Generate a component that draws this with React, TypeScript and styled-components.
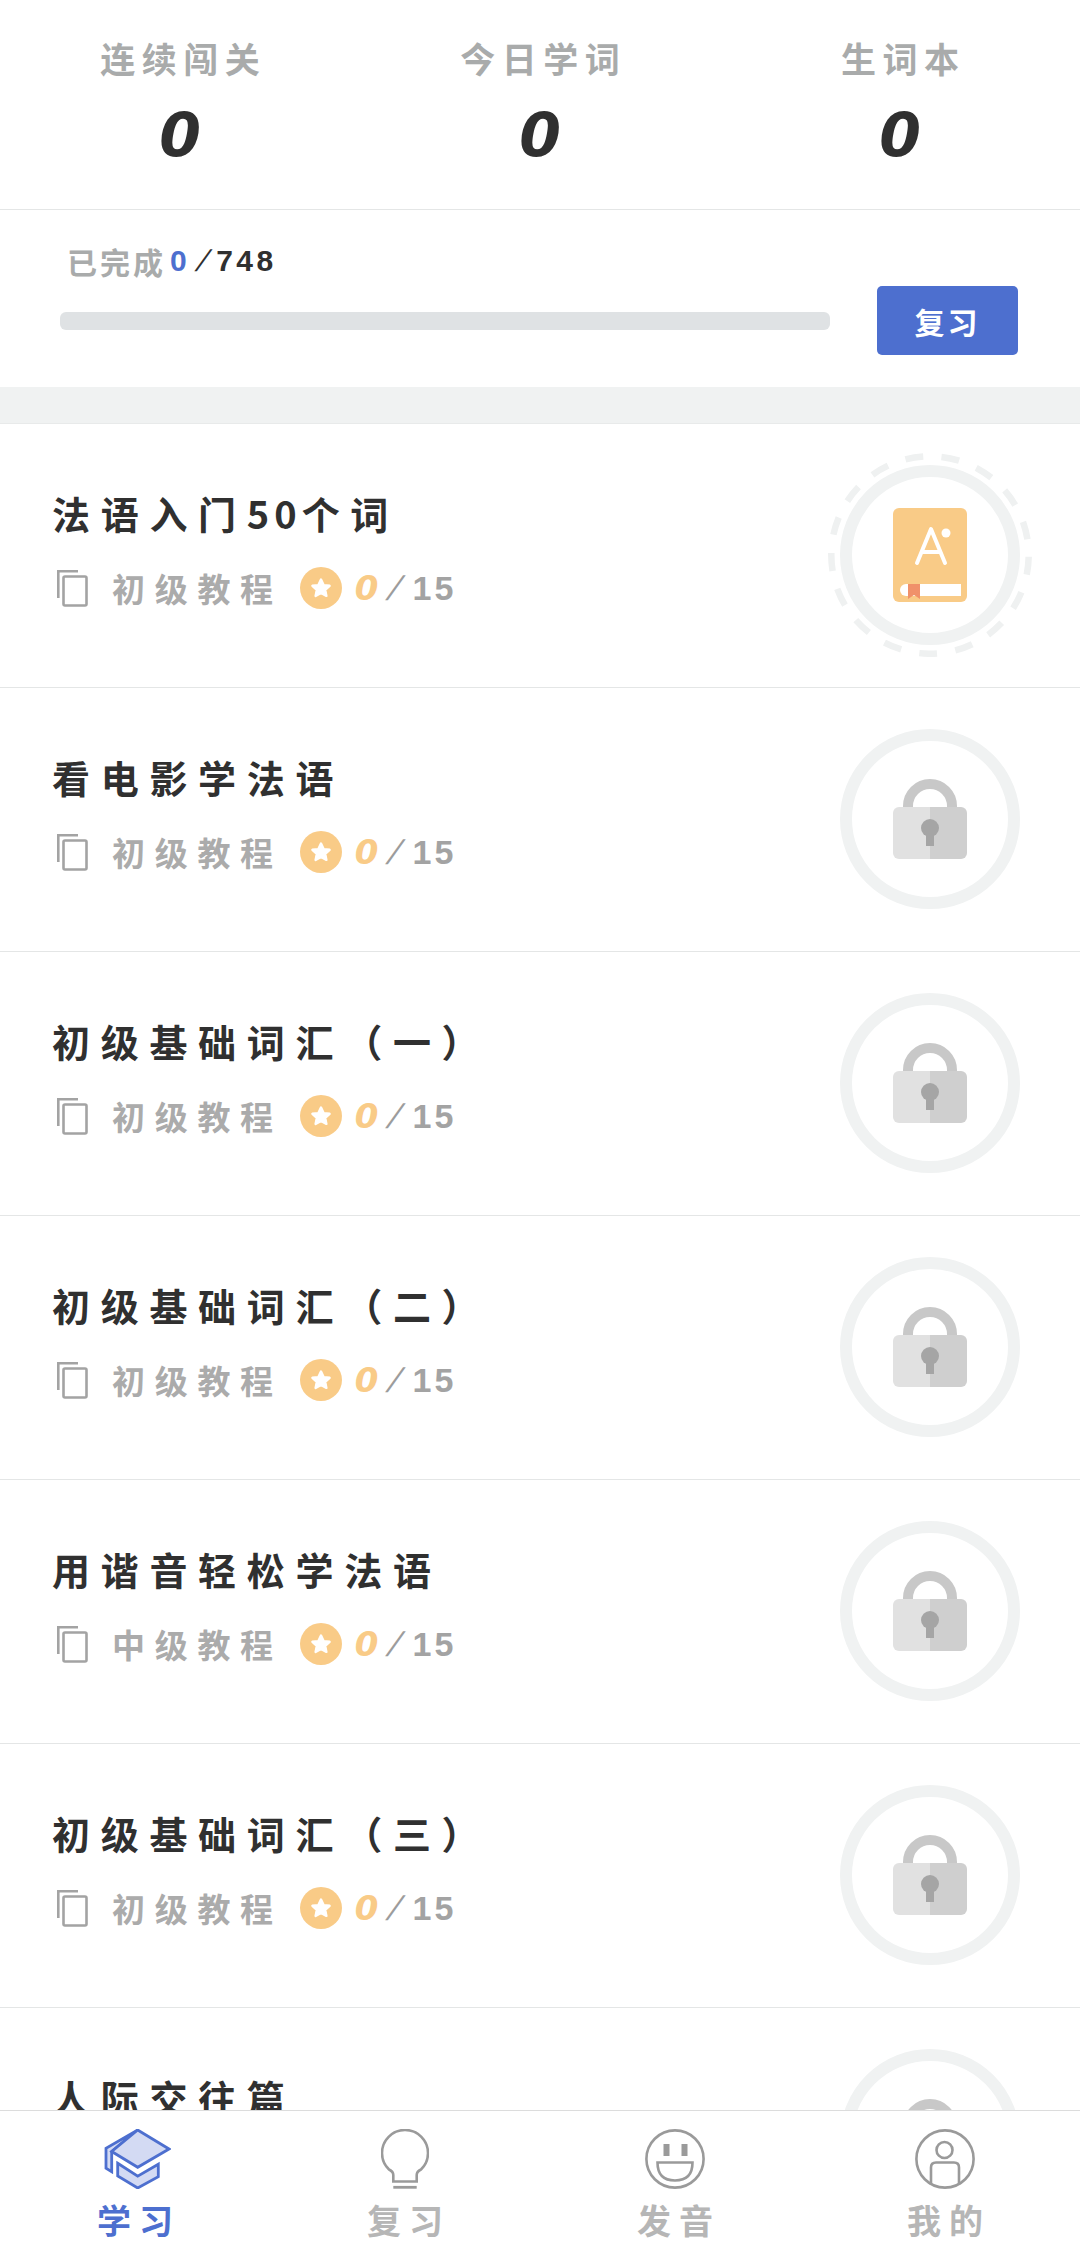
import React from 'react'
import styled, { createGlobalStyle } from 'styled-components'

const GlobalStyle = createGlobalStyle`
  * {
    box-sizing: border-box;
  }
  html, body {
    margin: 0;
    padding: 0;
    background: #fff;
    font-family: "Noto Sans CJK SC", "Liberation Sans", sans-serif;
  }
`

const Page = styled.div`
  display: flex;
  flex-direction: column;
  width: 1080px;
  height: 2247px;
  overflow: hidden;
  background: #fff;
`

const Scroller = styled.div`
  flex: 1;
  min-height: 0;
  overflow: hidden;
`

const Stats = styled.div`
  display: grid;
  grid-template-columns: repeat(3, 1fr);
  height: 210px;
  padding-top: 32px;
  border-bottom: 1px solid #e4e6e6;
`

const Stat = styled.div`
  display: flex;
  flex-direction: column;
  align-items: center;
`

const StatLabel = styled.div`
  font-size: 35px;
  line-height: 52px;
  font-weight: 700;
  letter-spacing: 6.5px;
  text-indent: 6.5px;
  color: #a9abab;
`

const StatValue = styled.div`
  margin-top: 13px;
  font-family: "DejaVu Sans", sans-serif;
  font-size: 60px;
  line-height: 76px;
  font-weight: 700;
  font-style: italic;
  color: #303030;
`

const Progress = styled.div`
  display: flex;
  align-items: flex-end;
  justify-content: space-between;
  height: 177px;
  padding: 0 62px 32px 60px;
`

const ProgressInfo = styled.div`
  display: flex;
  flex-direction: column;
  width: 770px;
  padding-bottom: 25px;
`

const ProgressLabel = styled.div`
  display: flex;
  align-items: center;
  height: 40px;
  margin: 0 0 31px 7px;
  font-size: 30px;
  font-weight: 700;
  letter-spacing: 3px;
  color: #a9abab;
`

const Digits = styled.span<{ $color: string }>`
  font-family: "Liberation Sans", sans-serif;
  font-weight: 700;
  letter-spacing: 3.5px;
  color: ${(p) => p.$color};
`

const BlueDigit = styled(Digits)`
  margin-left: 4px;
`

const Slash = styled.span<{ $color: string; $width: number }>`
  display: inline-block;
  width: ${(p) => p.$width}px;
  font-family: "Liberation Sans", sans-serif;
  font-weight: 400;
  letter-spacing: 0;
  text-align: center;
  color: ${(p) => p.$color};
  transform: skewX(-24deg);
`

const Track = styled.div`
  height: 18px;
  border-radius: 6px;
  background: #dfe2e4;
`

const ReviewButton = styled.button`
  width: 141px;
  height: 69px;
  padding: 0;
  border: none;
  border-radius: 5px;
  background: #4d6fcf;
  font-family: inherit;
  font-size: 30px;
  font-weight: 700;
  letter-spacing: 3px;
  color: #fff;
`

const Band = styled.div`
  height: 37px;
  background: #f0f2f2;
  border-bottom: 1px solid #e8eaea;
`

const Row = styled.div`
  display: flex;
  justify-content: space-between;
  align-items: center;
  height: 264px;
  padding: 0 60px 0 52px;
  border-bottom: 1px solid #e4e6e6;
`

const Info = styled.div`
  display: flex;
  flex-direction: column;
  align-self: flex-start;
  padding-top: 64px;
`

const Title = styled.div`
  font-size: 38px;
  line-height: 50px;
  font-weight: 700;
  letter-spacing: 10.7px;
  color: #303030;
`

const TitleDigits = styled.span`
  letter-spacing: 5px;
`

const Meta = styled.div`
  display: flex;
  align-items: center;
  height: 42px;
  margin-top: 29px;
  padding-left: 5px;
`

const Level = styled.span`
  margin-left: 24px;
  font-size: 33px;
  font-weight: 700;
  letter-spacing: 9.7px;
  color: #ababab;
`

const StarBadge = styled.span`
  display: flex;
  align-items: center;
  justify-content: center;
  width: 42px;
  height: 42px;
  margin-left: 17px;
  border-radius: 50%;
  background: #f9cb87;
`

const Score = styled.span`
  display: flex;
  align-items: center;
  margin-left: 13px;
  font-family: "Liberation Sans", sans-serif;
  font-size: 34px;
  font-weight: 700;
  letter-spacing: 3px;
  color: #a3a3a3;
`

const Earned = styled.span`
  font-family: "DejaVu Sans", sans-serif;
  font-style: italic;
  letter-spacing: 0;
  color: #f9cb87;
`

const Medal = styled.div`
  position: relative;
  display: flex;
  flex: none;
  align-items: center;
  justify-content: center;
  width: 180px;
  height: 180px;
  margin-bottom: 2px;
  border: 12px solid #f0f2f2;
  border-radius: 50%;
`

const DashedRing = styled.svg`
  position: absolute;
  top: -24px;
  left: -24px;
  width: 204px;
  height: 204px;
`

const TabBar = styled.nav`
  display: grid;
  flex: none;
  grid-template-columns: repeat(4, 1fr);
  height: 137px;
  padding-top: 18px;
  background: #fff;
  border-top: 1px solid #dcdcdc;
`

const Tab = styled.div`
  display: flex;
  flex-direction: column;
  align-items: center;
`

const TabLabel = styled.span<{ $active?: boolean }>`
  margin-top: 6px;
  font-size: 34px;
  line-height: 50px;
  font-weight: 700;
  letter-spacing: 8px;
  text-indent: 8px;
  color: ${(p) => (p.$active ? '#4d6fcf' : '#b6b6b6')};
`

const CopyIcon = () => (
  <svg width="31" height="37" viewBox="0 0 31 37" fill="none" stroke="#a3a3a3" strokeWidth="2.6">
    <path d="M21 1.3H1.3V28" />
    <rect x="6.5" y="6.5" width="23" height="29" rx="1.5" />
  </svg>
)

const StarIcon = () => (
  <svg width="22" height="22" viewBox="0 0 22 22" fill="#fff" stroke="#fff" strokeWidth="2.4" strokeLinejoin="round">
    <path d="M11 2.5l2.6 5.6 6 .7-4.4 4.1 1.2 6L11 16l-5.4 3 1.2-6-4.4-4.2 6-.7z" />
  </svg>
)

const BookIcon = () => (
  <svg width="74" height="94" viewBox="0 0 74 94">
    <rect width="74" height="94" rx="6" fill="#f9cb87" />
    <path d="M24 55L38 21L52 55M28.5 44H47.5" fill="none" stroke="#fff" strokeWidth="4" strokeLinecap="round" strokeLinejoin="round" />
    <circle cx="53" cy="25" r="4.5" fill="#fff" />
    <path d="M13 76H68V88H13A6 6 0 0 1 13 76Z" fill="#fff" />
    <path d="M15 76H27V91L21 87L15 91Z" fill="#f0916a" />
  </svg>
)

const LockIcon = () => (
  <svg width="74" height="80" viewBox="0 0 74 80">
    <path d="M15 29V27A22 22 0 0 1 59 27V29" fill="none" stroke="#c8c8c8" strokeWidth="10" />
    <path d="M37 28H6A6 6 0 0 0 0 34V74A6 6 0 0 0 6 80H37Z" fill="#e1e1e1" />
    <path d="M37 28H68A6 6 0 0 1 74 34V74A6 6 0 0 1 68 80H37Z" fill="#cfcfcf" />
    <circle cx="37" cy="49" r="9" fill="#a5a5a5" />
    <rect x="33" y="50" width="8" height="17" fill="#a5a5a5" />
  </svg>
)

const CapIcon = () => (
  <svg width="72" height="60" viewBox="-6 0 72 60" fill="#d3daf3" stroke="#4d6fcf" strokeWidth="2.8">
    <path d="M32.7 1L1 19.3V39.3L6.7 42.7V22.5Z" />
    <path d="M32.7 1L64 20L32.7 38.3L6.7 22.5Z" />
    <path d="M12.7 34.3L32.7 47.2L53.3 35.3V47.7L32.7 59L12.7 47Z" />
  </svg>
)

const BulbIcon = () => (
  <svg width="48" height="60" viewBox="0 0 48 60" fill="none" stroke="#9a9a9a" strokeWidth="2.6">
    <path d="M12.3 52.5H35.7V46Q35.7 42.5 40 40.5A23 23 0 1 0 8 40.5Q12.3 42.5 12.3 46Z" />
    <path d="M12.3 58.3H35.7" strokeWidth="2.8" />
  </svg>
)

const SmileIcon = () => (
  <svg width="60" height="60" viewBox="0 0 60 60" fill="none" stroke="#9a9a9a" strokeWidth="2.6">
    <circle cx="30" cy="30" r="28.6" />
    <rect x="18.5" y="15" width="6" height="12" fill="#9a9a9a" stroke="none" />
    <rect x="36.5" y="15" width="6" height="12" fill="#9a9a9a" stroke="none" />
    <path d="M12.5 33.5H47.5Q47.5 51.5 30 51.5Q12.5 51.5 12.5 33.5Z" />
  </svg>
)

const PersonIcon = () => (
  <svg width="60" height="60" viewBox="0 0 60 60" fill="none" stroke="#9a9a9a" strokeWidth="2.6">
    <circle cx="30" cy="30" r="28.6" />
    <circle cx="29.5" cy="21" r="8" />
    <path d="M16 56V38.5Q16 33.5 21 33.5H39Q44 33.5 44 38.5V56" />
  </svg>
)

type Lesson = { title: React.ReactNode; level?: string; open?: boolean }

const lessons: Lesson[] = [
  {
    title: (
      <>
        法语入门<TitleDigits>50</TitleDigits>个词
      </>
    ),
    level: '初级教程',
    open: true,
  },
  { title: '看电影学法语', level: '初级教程' },
  { title: '初级基础词汇（一）', level: '初级教程' },
  { title: '初级基础词汇（二）', level: '初级教程' },
  { title: '用谐音轻松学法语', level: '中级教程' },
  { title: '初级基础词汇（三）', level: '初级教程' },
  // last row sits under the tab bar, only its heading shows
  { title: '人际交往篇' },
]

const stats = ['连续闯关', '今日学词', '生词本']

const tabs = [
  { label: '学习', icon: <CapIcon />, active: true },
  { label: '复习', icon: <BulbIcon /> },
  { label: '发音', icon: <SmileIcon /> },
  { label: '我的', icon: <PersonIcon /> },
]

const App = () => {
  return (
    <Page>
      <GlobalStyle />
      <Scroller>
        <Stats>
          {stats.map((label) => (
            <Stat key={label}>
              <StatLabel>{label}</StatLabel>
              <StatValue>0</StatValue>
            </Stat>
          ))}
        </Stats>

        <Progress>
          <ProgressInfo>
            <ProgressLabel>
              已完成
              <BlueDigit $color="#4d6fcf">0</BlueDigit>
              <Slash $color="#303030" $width={26}>/</Slash>
              <Digits $color="#303030">748</Digits>
            </ProgressLabel>
            <Track />
          </ProgressInfo>
          <ReviewButton>复习</ReviewButton>
        </Progress>

        <Band />

        {lessons.map((lesson, i) => (
          <Row key={i}>
            <Info>
              <Title>{lesson.title}</Title>
              {lesson.level && (
                <Meta>
                  <CopyIcon />
                  <Level>{lesson.level}</Level>
                  <StarBadge>
                    <StarIcon />
                  </StarBadge>
                  <Score>
                    <Earned>0</Earned>
                    <Slash $color="#9c9c9c" $width={34}>/</Slash>
                    15
                  </Score>
                </Meta>
              )}
            </Info>
            <Medal>
              {lesson.open && (
                <DashedRing viewBox="0 0 204 204" fill="none">
                  <circle
                    cx="102"
                    cy="102"
                    r="98.7"
                    stroke="#eff1f1"
                    strokeWidth="6.5"
                    strokeDasharray="18 18.48"
                    transform="rotate(1 102 102)"
                  />
                </DashedRing>
              )}
              {lesson.open ? <BookIcon /> : <LockIcon />}
            </Medal>
          </Row>
        ))}
      </Scroller>

      <TabBar>
        {tabs.map((tab) => (
          <Tab key={tab.label}>
            {tab.icon}
            <TabLabel $active={tab.active}>{tab.label}</TabLabel>
          </Tab>
        ))}
      </TabBar>
    </Page>
  )
}

export default App
